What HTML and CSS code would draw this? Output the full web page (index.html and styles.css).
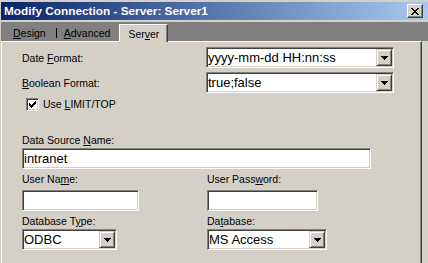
FILE: index.html
```html
<!DOCTYPE html>
<html>
<head>
<meta charset="utf-8">
<link rel="stylesheet" href="styles.css">
</head>
<body>
<div class="window">
  <div class="titlebar">
    <span class="title">Modify Connection - Server: Server1</span>
    <span class="close">
      <svg width="8" height="7" viewBox="0 0 8 7" shape-rendering="crispEdges"><path d="M0 0h2v1H0zM6 0h2v1H6zM1 1h2v1H1zM5 1h2v1H5zM2 2h4v1H2zM3 3h2v1H3zM2 4h4v1H2zM1 5h2v1H1zM5 5h2v1H5zM0 6h2v1H0zM6 6h2v1H6z" fill="#000"/></svg>
    </span>
  </div>
  <div class="tabstrip">
    <span class="tab"><u>D</u>esign</span>
    <span class="tab-sep"></span>
    <span class="tab tab-adv"><u>A</u>dvanced</span>
    <span class="tab tab-active">Ser<u>v</u>er</span>
  </div>
  <div class="panel">
    <div class="combo-row">
      <span class="label">Date <u>F</u>ormat:</span>
      <div class="combo w-188">
        <span class="combo-text">yyyy-mm-dd HH:nn:ss</span>
        <span class="drop-btn"><svg width="7" height="4" viewBox="0 0 7 4" shape-rendering="crispEdges"><path d="M0 0h7v1H0zM1 1h5v1H1zM2 2h3v1H2zM3 3h1v1H3z" fill="#000"/></svg></span>
      </div>
    </div>
    <div class="combo-row row-gap">
      <span class="label"><u>B</u>oolean Format:</span>
      <div class="combo w-188">
        <span class="combo-text">true;false</span>
        <span class="drop-btn"><svg width="7" height="4" viewBox="0 0 7 4" shape-rendering="crispEdges"><path d="M0 0h7v1H0zM1 1h5v1H1zM2 2h3v1H2zM3 3h1v1H3z" fill="#000"/></svg></span>
      </div>
    </div>
    <div class="check-row">
      <span class="checkbox"><svg width="7" height="7" viewBox="0 0 7 7" shape-rendering="crispEdges"><path d="M6 0h1v3H6zM5 1h1v3H5zM4 2h1v3H4zM3 3h1v3H3zM2 4h1v3H2zM1 3h1v3H1zM0 2h1v3H0z" fill="#000"/></svg></span>
      <span class="label">Use <u>L</u>IMIT/TOP</span>
    </div>
    <div class="label dsn-label">Data Source <u>N</u>ame:</div>
    <div class="textbox w-349"><span class="combo-text">intranet</span></div>
    <div class="pair">
      <div class="col">
        <span class="label">User Na<u>m</u>e:</span>
        <div class="textbox w-117 field-gap"></div>
      </div>
      <div class="col">
        <span class="label">User Pass<u>w</u>ord:</span>
        <div class="textbox w-111 field-gap"></div>
      </div>
    </div>
    <div class="pair pair-db">
      <div class="col">
        <span class="label">Database T<u>y</u>pe:</span>
        <div class="combo w-95 combo-gap">
          <span class="combo-text">ODBC</span>
          <span class="drop-btn"><svg width="7" height="4" viewBox="0 0 7 4" shape-rendering="crispEdges"><path d="M0 0h7v1H0zM1 1h5v1H1zM2 2h3v1H2zM3 3h1v1H3z" fill="#000"/></svg></span>
        </div>
      </div>
      <div class="col">
        <span class="label">Da<u>t</u>abase:</span>
        <div class="combo w-120 combo-gap">
          <span class="combo-text">MS Access</span>
          <span class="drop-btn"><svg width="7" height="4" viewBox="0 0 7 4" shape-rendering="crispEdges"><path d="M0 0h7v1H0zM1 1h5v1H1zM2 2h3v1H2zM3 3h1v1H3z" fill="#000"/></svg></span>
        </div>
      </div>
    </div>
  </div>
</div>
</body>
</html>
```
FILE: styles.css
```css
html, body {
  margin: 0;
  padding: 0;
}
body {
  width: 428px;
  height: 263px;
  overflow: hidden;
  background: #d4d0c8;
  font-family: "Liberation Sans", Arial, sans-serif;
  font-size: 10.5px;
  color: #000;
}
u {
  text-decoration: underline;
  text-underline-offset: 1px;
}
.window {
  display: flex;
  flex-direction: column;
  height: 263px;
  padding-left: 1px;
}
.titlebar {
  margin-top: 2px;
  height: 18px;
  background: linear-gradient(to right, #0a246a, #a6caf0);
  display: flex;
  align-items: center;
  justify-content: space-between;
  padding: 0 5px 0 3px;
}
.title {
  color: #fff;
  font-weight: bold;
  font-size: 11.8px;
  line-height: 18px;
  white-space: nowrap;
}
.close {
  box-sizing: border-box;
  width: 16px;
  height: 14px;
  background: #d4d0c8;
  border: 1px solid;
  border-color: #fff #404040 #404040 #fff;
  box-shadow: inset -1px -1px #808080;
  display: flex;
  align-items: center;
  justify-content: center;
}
.close svg {
  display: block;
  margin-left: -1px;
}
.tabstrip {
  margin-top: 2px;
  height: 19px;
  background: #808080;
  display: flex;
  padding-left: 12px;
}
.tab {
  display: flex;
  align-items: center;
  padding-top: 2px;
  white-space: nowrap;
}
.tab-sep {
  width: 1px;
  height: 10px;
  background: #000;
  margin: 6px 0 0 10px;
}
.tab-adv {
  margin-left: 7px;
}
.tab-active {
  position: relative;
  z-index: 1;
  margin: 2px 0 -1px 9px;
  padding: 0 8px;
  background: #d4d0c8;
  border-top: 1px solid #fff;
  border-left: 1px solid #fff;
  border-right: 1px solid #404040;
  box-shadow: inset -1px 0 #808080;
}
.panel {
  box-sizing: border-box;
  width: 421px;
  flex: 1;
  border-top: 1px solid #fff;
  border-left: 1px solid #fff;
  border-right: 1px solid #404040;
  box-shadow: inset -1px 0 #808080;
  padding: 5px 0 0 20px;
}
.label {
  line-height: 13px;
  white-space: nowrap;
}
.combo-row {
  display: grid;
  grid-template-columns: 184px 188px;
  align-items: center;
  height: 21px;
}
.combo-row .label {
  padding-top: 2px;
}
.row-gap {
  margin-top: 4px;
}
.combo, .textbox {
  box-sizing: border-box;
  height: 21px;
  display: flex;
  background: #fff;
  border: 1px solid;
  border-color: #808080 #fff #fff #808080;
  box-shadow: inset 1px 1px #404040, inset -1px -1px #d4d0c8;
  padding: 1px;
}
.combo-text {
  flex: 1;
  font-size: 13px;
  line-height: 17px;
  white-space: nowrap;
  overflow: hidden;
}
.drop-btn {
  box-sizing: border-box;
  width: 16px;
  height: 17px;
  background: #d4d0c8;
  border: 1px solid;
  border-color: #d4d0c8 #404040 #404040 #d4d0c8;
  box-shadow: inset 1px 1px #fff, inset -1px -1px #808080;
  display: flex;
  align-items: center;
  justify-content: center;
}
.drop-btn svg {
  display: block;
}
.w-188 { width: 188px; }
.w-349 { width: 349px; }
.w-117 { width: 117px; }
.w-111 { width: 111px; }
.w-95 { width: 95px; }
.w-120 { width: 120px; }
.check-row {
  display: flex;
  align-items: center;
  height: 13px;
  margin: 5px 0 0 4px;
  gap: 4px;
}
.checkbox {
  box-sizing: border-box;
  width: 13px;
  height: 13px;
  background: #fff;
  border: 1px solid;
  border-color: #808080 #fff #fff #808080;
  box-shadow: inset 1px 1px #404040, inset -1px -1px #d4d0c8;
  display: flex;
  align-items: center;
  justify-content: center;
}
.checkbox svg {
  display: block;
}
.dsn-label {
  margin-top: 23px;
}
.textbox.w-349 {
  margin-top: 1px;
}
.pair {
  display: grid;
  grid-template-columns: 185px auto;
  margin-top: 4px;
}
.col {
  display: flex;
  flex-direction: column;
  align-items: flex-start;
}
.field-gap {
  margin-top: 4px;
}
.combo-gap {
  margin-top: 1px;
}
```
